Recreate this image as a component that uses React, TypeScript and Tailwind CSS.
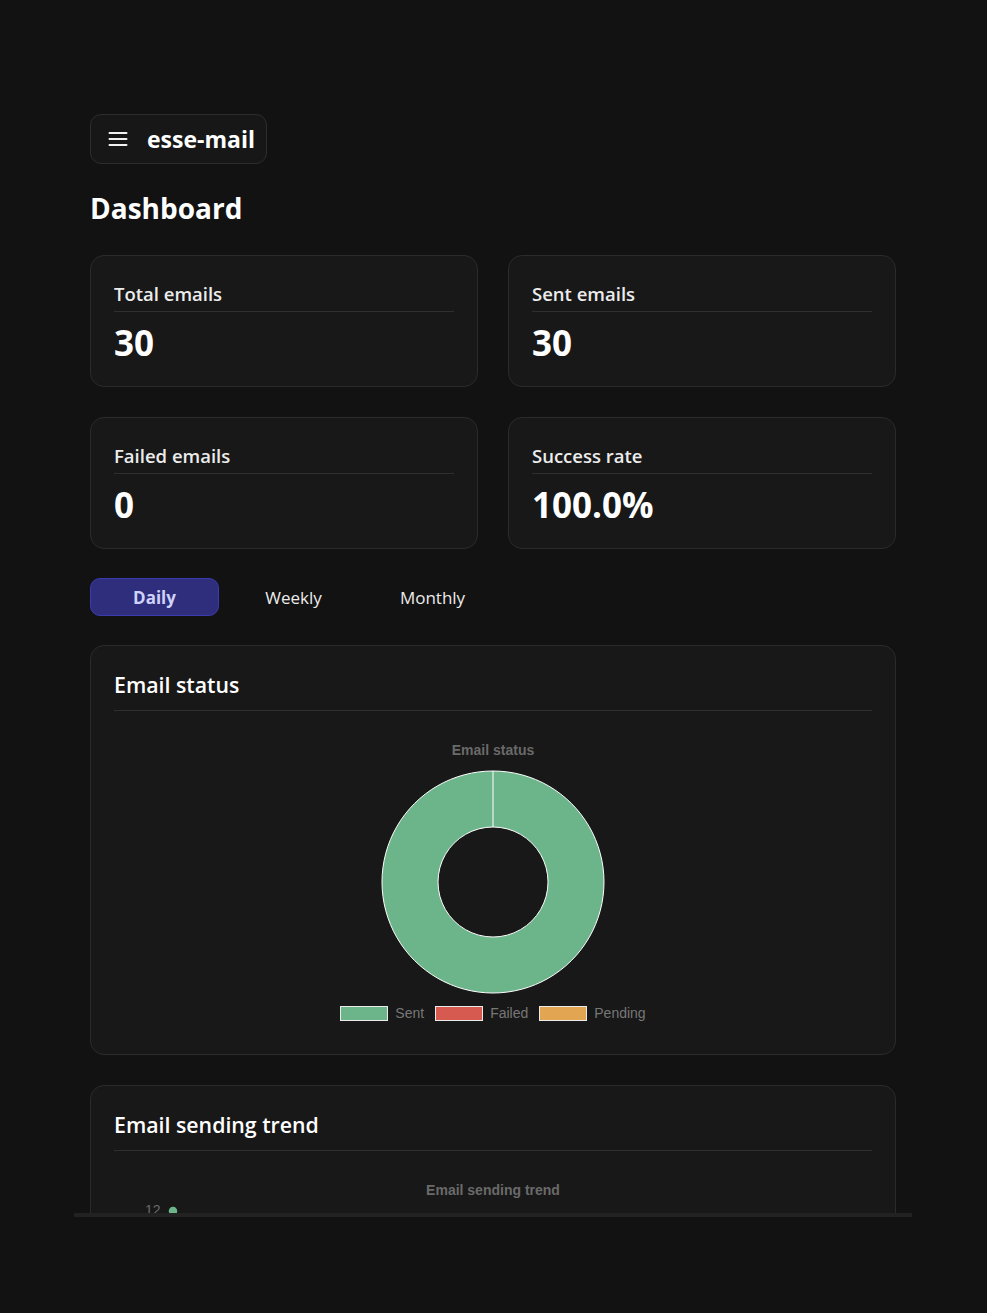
import React from "react";

const stats = [
  { label: "Total emails", value: "30" },
  { label: "Sent emails", value: "30" },
  { label: "Failed emails", value: "0" },
  { label: "Success rate", value: "100.0%" },
];

function StatCard({ label, value }: { label: string; value: string }) {
  return (
    <div className="h-[132px] rounded-[14px] border border-[#2b2b2b] bg-[#181818] px-[23px] pt-[25px]">
      <div className="border-b border-[#2f2f2f] pb-[4px] text-[18.5px] leading-[26px] font-semibold text-[#ececec]">
        {label}
      </div>
      <div className="mt-[9px] text-[35px] leading-[44px] font-bold text-white">{value}</div>
    </div>
  );
}

function Donut() {
  return (
    <svg width="226" height="226" viewBox="0 0 226 226">
      <path
        d="M113 2 A111 111 0 1 1 112.99 2 Z M113 58 A55 55 0 1 0 113.01 58 Z"
        fill="#6cb48a"
        fillRule="evenodd"
        stroke="#ffffff"
        strokeWidth="1"
      />
      <line x1="113" y1="2" x2="113" y2="58" stroke="#ffffff" strokeWidth="1" />
    </svg>
  );
}

function LegendItem({ color, label }: { color: string; label: string }) {
  return (
    <div className="flex items-center gap-[7px]">
      <div className="h-[15px] w-[48px] border border-[#eaeaea]" style={{ backgroundColor: color }} />
      <span className="font-['Liberation_Sans',sans-serif] text-[14px] leading-[16px] text-[#777777]">{label}</span>
    </div>
  );
}

function Hamburger() {
  return (
    <svg width="20" height="16" viewBox="0 0 20 16">
      <rect x="0.5" y="1" width="19" height="2" rx="1" fill="#f2f2f2" />
      <rect x="0.5" y="7" width="19" height="2" rx="1" fill="#f2f2f2" />
      <rect x="0.5" y="13" width="19" height="2" rx="1" fill="#f2f2f2" />
    </svg>
  );
}

export default function App() {
  return (
    <div className="min-h-screen bg-[#121212] font-['Open_Sans','Noto_Sans',sans-serif]">
      <div className="ml-[74px] w-[838px] pt-[98px]">
        <div className="h-[1115px] overflow-hidden px-4 pt-4">
          {/* Header */}
          <div className="inline-flex h-[50px] items-center gap-[19px] rounded-[11px] border border-[#2d2d2d] bg-[#171717] pr-[11px] pl-[17px]">
            <Hamburger />
            <span className="text-[23px] leading-[30px] font-bold text-white">esse-mail</span>
          </div>

          <h1 className="mt-[27px] text-[28px] leading-[34px] font-bold text-white">Dashboard</h1>

          <div className="mt-[30px] grid grid-cols-2 gap-[30px]">
            {stats.map((s) => (
              <StatCard key={s.label} label={s.label} value={s.value} />
            ))}
          </div>

          {/* Tabs */}
          <div className="mt-[29px] flex gap-[10px]">
            <button className="h-[38px] w-[129px] rounded-[10px] border border-[#3b3bb0] bg-[#2e2e7c] pt-[2px] text-[17px] font-bold text-[#cfd2fb]">
              Daily
            </button>
            <button className="h-[38px] w-[129px] rounded-[10px] pt-[2px] text-[17px] text-[#ececec]">Weekly</button>
            <button className="h-[38px] w-[129px] rounded-[10px] pt-[2px] text-[17px] text-[#ececec]">Monthly</button>
          </div>

          {/* Email status */}
          <div className="mt-[29px] h-[410px] rounded-[14px] border border-[#2b2b2b] bg-[#181818] px-[23px] pt-[24px]">
            <div className="border-b border-[#2f2f2f] pb-[10px] text-[21.3px] leading-[30px] font-semibold text-white">
              Email status
            </div>
            <div className="flex flex-col items-center pt-[31px]">
              <div className="font-['Liberation_Sans',sans-serif] text-[14px] leading-[16px] font-bold text-[#6a6a6a]">
                Email status
              </div>
              <div className="mt-[11px]">
                <Donut />
              </div>
              <div className="mt-[10px] flex items-center gap-[11px]">
                <LegendItem color="#6cb48a" label="Sent" />
                <LegendItem color="#d65a50" label="Failed" />
                <LegendItem color="#e2a552" label="Pending" />
              </div>
            </div>
          </div>

          {/* Email sending trend */}
          <div className="mt-[30px] h-[411px] rounded-[14px] border border-[#2b2b2b] bg-[#181818] px-[23px] pt-[24px]">
            <div className="border-b border-[#2f2f2f] pb-[10px] text-[21.3px] leading-[30px] font-semibold text-white">
              Email sending trend
            </div>
            <div className="flex flex-col items-center pt-[31px]">
              <div className="font-['Liberation_Sans',sans-serif] text-[14px] leading-[16px] font-bold text-[#6a6a6a]">
                Email sending trend
              </div>
            </div>
            <svg width="760" height="200" viewBox="0 0 760 200" className="mt-[4px] block">
              <text x="31" y="13" fill="#6a6a6a" fontSize="14" fontFamily="Liberation Sans, sans-serif">
                12
              </text>
              <circle cx="59" cy="9" r="3.5" fill="#6cb48a" stroke="#6cb48a" strokeWidth="1.5" />
            </svg>
          </div>
        </div>
        <div className="h-[4px] bg-[#222222]" />
      </div>
    </div>
  );
}
